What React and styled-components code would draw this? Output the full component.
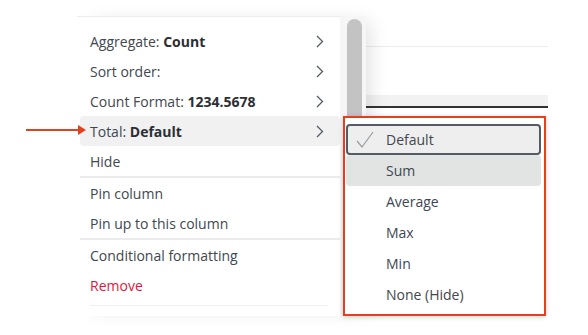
import React from 'react'
import styled, { createGlobalStyle } from 'styled-components'

const GlobalStyle = createGlobalStyle`
  body {
    margin: 0;
    background: #fff;
    font-family: "Open Sans", "Noto Sans", sans-serif;
  }
`

const menuItems = [
  { label: 'Aggregate: ', value: 'Count', sub: true },
  { label: 'Sort order:', sub: true },
  { label: 'Count Format: ', value: '1234.5678', sub: true },
  { label: 'Total: ', value: 'Default', sub: true, active: true, arrow: true },
  { label: 'Hide' },
  { divider: true },
  { label: 'Pin column' },
  { label: 'Pin up to this column' },
  { divider: true },
  { label: 'Conditional formatting' },
  { label: 'Remove', danger: true },
]

const totalOptions = ['Default', 'Sum', 'Average', 'Max', 'Min', 'None (Hide)']

function Chevron() {
  return (
    <svg width="8" height="13" viewBox="0 0 8 13">
      <path d="M1 1l5.5 5.5L1 12" fill="none" stroke="#545b64" strokeWidth="1.3" />
    </svg>
  )
}

function Check() {
  return (
    <svg width="18" height="17" viewBox="0 0 18 17">
      <path d="M1 10l5 6L17 1" fill="none" stroke="#9a9ea3" strokeWidth="1.2" />
    </svg>
  )
}

function App() {
  return (
    <>
      <GlobalStyle />
      <Stage>
        <MenuWrap>
          <Menu>
            {menuItems.map((item, i) =>
              item.divider ? (
                <Divider key={i} />
              ) : (
                <Row key={i} active={item.active} danger={item.danger}>
                  {item.arrow && <Pointer />}
                  <span>
                    {item.label}
                    {item.value && <b>{item.value}</b>}
                  </span>
                  {item.sub && <Chevron />}
                </Row>
              )
            )}
            <BottomLine />
          </Menu>
          <ScrollTrack>
            <Thumb />
          </ScrollTrack>
        </MenuWrap>
        <Table>
          <TopRule />
          <HeadBand />
        </Table>
        <SubMenu>
          {totalOptions.map((opt, i) => (
            <Option key={opt} selected={i === 0} hovered={i === 1}>
              <CheckSlot>{i === 0 && <Check />}</CheckSlot>
              {opt}
            </Option>
          ))}
        </SubMenu>
      </Stage>
    </>
  )
}

export default App

const Stage = styled.div`
  position: relative;
  display: flex;
  align-items: flex-start;
  padding: 16px 0 0 77px;
  width: 588px;
  height: 335px;
  box-sizing: border-box;
`
const MenuWrap = styled.div`
  display: flex;
  position: relative;
  z-index: 1;
  box-shadow: 10px 0 18px -6px rgba(0, 0, 0, 0.12);
`
const Menu = styled.div`
  width: 263px;
  box-sizing: border-box;
  padding: 9px 0 8px 3px;
  border-top: 1px solid #eaeded;
  background: #fff;
`
const Row = styled.div`
  position: relative;
  height: 30px;
  display: flex;
  align-items: center;
  justify-content: space-between;
  padding: 0 16px 0 10px;
  border-radius: 4px;
  font-size: 14px;
  font-weight: 500;
  color: ${p => (p.danger ? '#d91a3c' : '#414750')};
  background: ${p => (p.active ? '#f1f1f1' : 'transparent')};
  b {
    font-weight: 700;
    color: #2b2f35;
  }
`
const Pointer = styled.div`
  position: absolute;
  right: 100%;
  top: 50%;
  width: 58px;
  height: 2px;
  margin-top: -2px;
  margin-right: -4px;
  background: #e5401e;
  &::after {
    content: '';
    position: absolute;
    right: -2px;
    top: -4px;
    border-left: 8px solid #e5401e;
    border-top: 5px solid transparent;
    border-bottom: 5px solid transparent;
  }
`
const Divider = styled.div`
  height: 2px;
  background: #e9ebed;
  margin: 0;
`
const BottomLine = styled.div`
  height: 1px;
  background: #eef0f1;
  margin: 5px 12px 0 10px;
`
const ScrollTrack = styled.div`
  width: 26px;
  height: 300px;
  background: #f6f6f6;
  padding: 3px 4px 0 7px;
  box-sizing: border-box;
`
const Thumb = styled.div`
  width: 15px;
  height: 260px;
  border-radius: 8px;
  background: #c3c3c3;
`
const Table = styled.div`
  width: 182px;
  padding-top: 30px;
`
const TopRule = styled.div`
  height: 1px;
  background: #ececec;
`
const HeadBand = styled.div`
  margin-top: 48px;
  height: 11px;
  background: #f2f2f2;
  border-bottom: 2px solid #333;
`
const SubMenu = styled.div`
  position: absolute;
  left: 343px;
  top: 116px;
  z-index: 2;
  width: 203px;
  height: 200px;
  box-sizing: border-box;
  padding: 6px 3px 0 1px;
  background: #fff;
  border: 2px solid #e5401e;
  box-shadow: 0 1px 5px rgba(0, 0, 0, 0.18);
`
const Option = styled.div`
  height: 31px;
  box-sizing: border-box;
  display: flex;
  align-items: center;
  padding-left: ${p => (p.selected ? '8px' : '10px')};
  border-radius: 4px;
  font-size: 14px;
  font-weight: 500;
  color: #414750;
  border: ${p => (p.selected ? '2px solid #545b64' : 'none')};
  background: ${p => (p.selected ? '#eeeeee' : p.hovered ? '#e2e3e3' : 'transparent')};
`
const CheckSlot = styled.span`
  width: 30px;
  display: flex;
  align-items: center;
`
